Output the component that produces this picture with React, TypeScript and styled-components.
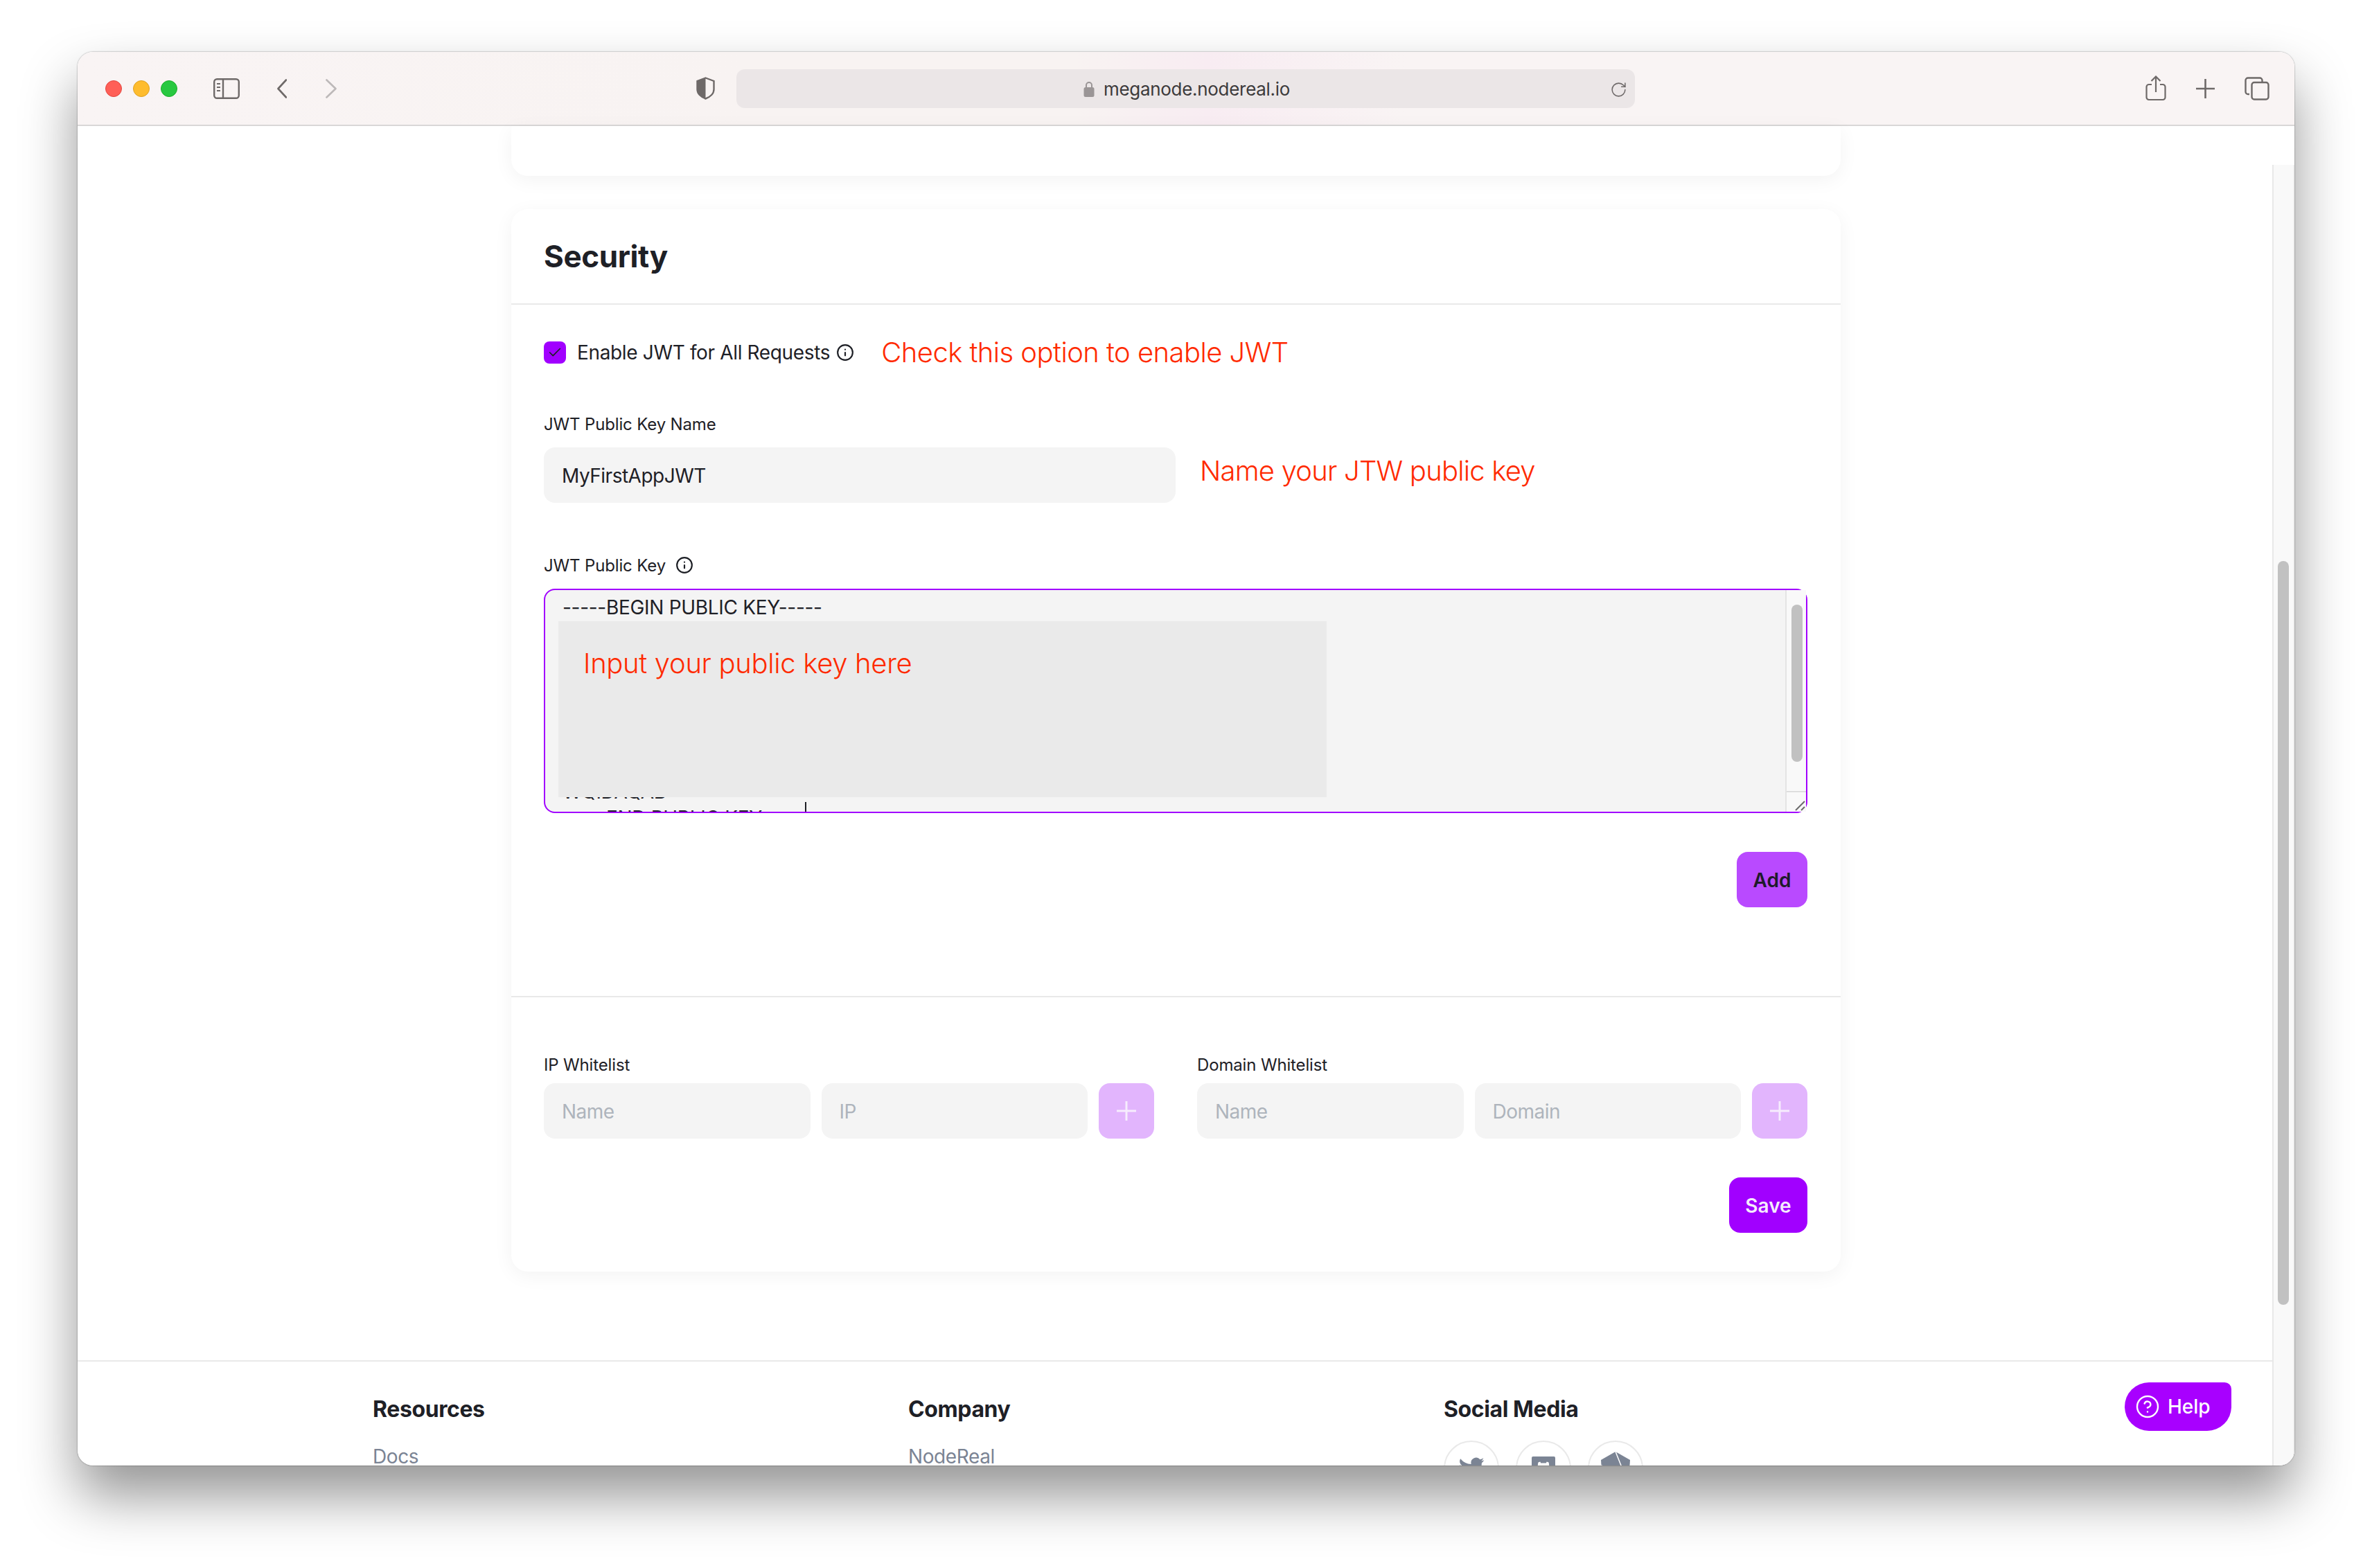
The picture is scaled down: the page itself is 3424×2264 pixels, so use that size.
import styled, { createGlobalStyle } from "styled-components";
import { Check, CircleHelp, Info, RotateCw } from "lucide-react";

const GlobalStyle = createGlobalStyle`
  html, body {
    margin: 0;
    padding: 0;
    background: #fff;
  }
  body {
    width: 3424px;
    height: 2264px;
    overflow: hidden;
    font-family: Inter, "Liberation Sans", sans-serif;
    letter-spacing: -0.3px;
    color: #1e2026;
  }
  * {
    box-sizing: border-box;
  }
`;

const Page = styled.div`
  padding: 75px 112px 0;
`;

const Window = styled.div`
  position: relative;
  display: flex;
  flex-direction: column;
  width: 3200px;
  height: 2041px;
  border-radius: 22px;
  overflow: hidden;
  background: #fff;
`;

const WindowShadow = styled.div`
  border-radius: 22px;
  box-shadow: 0 0 2px rgba(0, 0, 0, 0.5), 0 44px 80px rgba(0, 0, 0, 0.42);
`;

const TitleBar = styled.div`
  flex: 0 0 auto;
  display: flex;
  align-items: center;
  height: 107px;
  padding: 0 36px 0 40px;
  background: linear-gradient(
    90deg,
    #f9f4f4 0%,
    #f8f3f2 30%,
    #f8f3f2 45%,
    #f8ecf2 51%,
    #f9f4f4 60%
  );
  border-bottom: 2px solid #d9d7d7;
`;

const Lights = styled.div`
  display: flex;
  gap: 16px;
`;

const Light = styled.span<{ $fill: string; $edge: string }>`
  width: 24px;
  height: 24px;
  border-radius: 50%;
  background: ${(p) => p.$fill};
  border: 1px solid ${(p) => p.$edge};
`;

const BarIcon = styled.svg<{ $left: number }>`
  flex: 0 0 auto;
  display: block;
  margin-left: ${(p) => p.$left}px;
`;

const UrlBar = styled.div`
  position: relative;
  display: flex;
  align-items: center;
  justify-content: center;
  gap: 13px;
  width: 1297px;
  height: 56px;
  margin-left: 31px;
  padding: 2px 0 0 3px;
  border-radius: 12px;
  background: #ebe6e7;
  font-size: 26px;
  color: #3c3a3b;
`;

const Reload = styled.span`
  position: absolute;
  right: 11px;
  top: 17px;
  display: flex;
  color: #6f6a6a;
`;

const BarActions = styled.div`
  display: flex;
  align-items: center;
  margin-left: auto;
`;

const Body = styled.div`
  flex: 1 1 0;
  display: flex;
  min-height: 0;
`;

const Main = styled.div`
  flex: 1 1 0;
  min-width: 0;
`;

const PageScrollTrack = styled.div`
  flex: 0 0 30px;
  margin-top: 56px;
  padding: 572px 6px 0 6px;
  background: #f9f9f9;
  border-left: 2px solid #e8e8e8;
  border-right: 2px solid #f0f0f0;
`;

const PageScrollThumb = styled.div`
  width: 16px;
  height: 1074px;
  border-radius: 8px;
  background: #c1c1c1;
`;

const Card = styled.section`
  width: 1919px;
  margin-left: 626px;
  background: #fff;
  box-shadow: 0 6px 28px rgba(0, 0, 0, 0.05);
`;

const TopCardEnd = styled(Card)`
  height: 72px;
  margin-bottom: 48px;
  border-radius: 0 0 24px 24px;
`;

const SecurityCard = styled(Card)`
  border-radius: 24px;
  margin-bottom: 128px;
`;

const CardHeader = styled.header`
  display: flex;
  align-items: center;
  height: 138px;
  padding: 0 48px 0 47px;
  border-bottom: 2px solid #e9e9e9;
`;

const CardTitle = styled.h2`
  margin: 0;
  font-size: 44px;
  font-weight: 700;
  letter-spacing: -0.4px;
  color: #1e2026;
`;

const JwtSection = styled.div`
  padding: 53px 48px 128px 47px;
  border-bottom: 2px solid #e9e9e9;
`;

const CheckRow = styled.div`
  display: flex;
  align-items: center;
  height: 32px;
  margin-bottom: 70px;
`;

const CheckBox = styled.span`
  display: flex;
  align-items: center;
  justify-content: center;
  width: 32px;
  height: 32px;
  margin-right: 16px;
  border-radius: 8px;
  background: #a100ff;
  color: #1e2026;
`;

const CheckLabel = styled.span`
  font-size: 28px;
  letter-spacing: -0.35px;
  margin-right: 9px;
`;

const Annotation = styled.span<{ $left?: number; $spacing: number }>`
  margin-left: ${(p) => p.$left ?? 0}px;
  font-size: 40px;
  font-weight: 300;
  letter-spacing: ${(p) => p.$spacing}px;
  line-height: 48px;
  white-space: nowrap;
  color: #ff2a00;
`;

const FieldLabel = styled.label<{ $gap?: number }>`
  display: flex;
  align-items: center;
  gap: 14px;
  height: 34px;
  margin-bottom: ${(p) => p.$gap ?? 17}px;
  font-size: 24px;
  letter-spacing: -0.15px;
  color: #1e2026;
`;

const NameRow = styled.div`
  display: flex;
  align-items: center;
  gap: 35px;
  margin-bottom: 73px;
`;

const TextInput = styled.input`
  display: block;
  flex: 1 1 0;
  min-width: 0;
  height: 80px;
  padding: 2px 26px 0;
  border: none;
  border-radius: 16px;
  outline: none;
  background: #f4f4f4;
  font-family: inherit;
  font-size: 28px;
  letter-spacing: -0.5px;
  color: #1e2026;

  &::placeholder {
    color: #aeb4bc;
    opacity: 1;
  }
`;

const NameInput = styled(TextInput)`
  flex: 0 0 912px;
`;

const NameAnnotation = styled(Annotation)`
  padding-bottom: 12px;
`;

const KeyBox = styled.div`
  position: relative;
  height: 324px;
  border: 2px solid #a100ff;
  border-radius: 16px;
  background: #f4f4f4;
`;

const KeyHead = styled.div`
  height: 45px;
  padding: 6px 0 0 25px;
  font-size: 28px;
  line-height: 38px;
  color: #1e2026;
`;

const KeyCover = styled.div`
  width: 1109px;
  height: 254px;
  margin-left: 19px;
  padding: 37px 0 0 36px;
  background: #eaeaea;
`;

const KeyTail = styled.div`
  height: 21px;
  padding-left: 25px;
  overflow: hidden;
  font-size: 28px;
  line-height: 38px;
  color: #1e2026;
`;

const KeyTailLines = styled.pre`
  margin: -27px 0 0;
  font-family: inherit;
`;

const KeyCaret = styled.span`
  position: absolute;
  left: 375px;
  top: 306px;
  width: 2px;
  height: 14px;
  background: #1e2026;
`;

const KeyScrollTrack = styled.div`
  position: absolute;
  top: 0;
  right: 0;
  bottom: 0;
  width: 30px;
  padding: 21px 5px 0 7px;
  background: #f9f9f9;
  border-left: 2px solid #e4e4e4;
`;

const KeyScrollThumb = styled.div`
  width: 16px;
  height: 227px;
  border-radius: 8px;
  background: #c1c1c1;
`;

const KeyResizer = styled.div`
  position: absolute;
  left: 0;
  right: 0;
  bottom: 0;
  height: 30px;
  border-top: 2px solid #dedede;
`;

const ButtonRow = styled.div`
  display: flex;
  justify-content: flex-end;
  margin-top: 56px;
`;

const Button = styled.button<{ $fill: string; $ink: string; $width: number }>`
  width: ${(p) => p.$width}px;
  height: 80px;
  padding: 2px 0 0;
  border: none;
  border-radius: 16px;
  background: ${(p) => p.$fill};
  font-family: inherit;
  font-size: 28px;
  font-weight: 600;
  color: ${(p) => p.$ink};
`;

const ListsSection = styled.div`
  padding: 80px 48px 56px 47px;
`;

const ListsGrid = styled.div`
  display: grid;
  grid-template-columns: 881px 881px;
  gap: 62px;
`;

const ListRow = styled.div`
  display: flex;
  gap: 16px;
`;

const PlusButton = styled.button`
  display: flex;
  align-items: center;
  justify-content: center;
  flex: 0 0 80px;
  height: 80px;
  padding: 0;
  border: none;
  border-radius: 16px;
  background: #e2b5fd;
`;

const Footer = styled.footer`
  display: grid;
  grid-template-columns: repeat(3, 773px);
  padding: 49px 0 0 426px;
  border-top: 2px solid #e9e9e9;
`;

const FooterColumn = styled.div`
  display: flex;
  flex-direction: column;
`;

const FooterHeading = styled.h4`
  margin: 0 0 31px;
  font-size: 32px;
  line-height: 40px;
  font-weight: 700;
  letter-spacing: -0.4px;
  color: #1e2026;
`;

const FooterLink = styled.a`
  font-size: 28px;
  line-height: 34px;
  letter-spacing: -0.4px;
  color: #7b8494;
`;

const SocialRow = styled.div`
  display: flex;
  gap: 24px;
  margin-top: -6px;
`;

const SocialCircle = styled.a`
  display: flex;
  align-items: center;
  justify-content: center;
  width: 80px;
  height: 80px;
  border: 2px solid #e9e9e9;
  border-radius: 50%;
  color: #7b8494;
`;

const HelpButton = styled.button`
  position: absolute;
  right: 91px;
  bottom: 50px;
  display: flex;
  align-items: center;
  gap: 11px;
  width: 154px;
  height: 70px;
  padding: 0 0 0 15px;
  border: none;
  border-radius: 36px 10px 36px 36px;
  background: #a800ff;
  font-family: inherit;
  font-size: 28px;
  font-weight: 500;
  color: #fff;
`;

const PlusIcon = () => (
  <svg width="28" height="28" viewBox="0 0 28 28" fill="none" stroke="#f6ecfd" strokeWidth="3">
    <path d="M14 0v28M0 14h28" />
  </svg>
);

const App = () => {
  return (
    <>
      <GlobalStyle />
      <Page>
        <WindowShadow>
          <Window>
            <TitleBar>
              <Lights>
                <Light $fill="#ff5f57" $edge="#e2463f" />
                <Light $fill="#febc2e" $edge="#dea123" />
                <Light $fill="#28c840" $edge="#1dad2b" />
              </Lights>
              <BarIcon $left={52} width="38" height="30" viewBox="0 0 38 30" fill="none" stroke="#6e6968" strokeWidth="2.4">
                <rect x="1.2" y="1.2" width="35.6" height="27.6" rx="4" />
                <path d="M14 1v28" />
                <path d="M5 8h5M5 13h5M5 18h5" strokeWidth="2" />
              </BarIcon>
              <BarIcon $left={54} width="14" height="28" viewBox="0 0 14 28" fill="none" stroke="#6e6968" strokeWidth="2.6" strokeLinecap="round" strokeLinejoin="round">
                <path d="M13 1.5 1.5 14 13 26.5" />
              </BarIcon>
              <BarIcon $left={56} width="16" height="28" viewBox="0 0 16 28" fill="none" stroke="#bdb9b9" strokeWidth="2.6" strokeLinecap="round" strokeLinejoin="round">
                <path d="M1.5 1.5 14.5 14 1.5 26.5" />
              </BarIcon>
              <BarIcon $left={519} width="27" height="33" viewBox="0 0 27 33">
                <path d="M13.5 1.5 25.5 6v12c0 6-5 11-12 13.5C6.500 29 1.500 24 1.500 18V6z" fill="none" stroke="#6e6968" strokeWidth="2.4" />
                <path d="M13.500 1.500 1.500 6v12c0 6 5 11 12 13.500z" fill="#6e6968" />
              </BarIcon>
              <UrlBar>
                <svg width="16" height="23" viewBox="0 0 16 23" fill="none">
                  <path d="M4 10V6a4 4 0 0 1 8 0v4" stroke="#9a9596" strokeWidth="2" />
                  <rect x="0.500" y="9" width="15" height="14" rx="2.500" fill="#9a9596" />
                </svg>
                meganode.nodereal.io
                <Reload>
                  <RotateCw size={25} strokeWidth={1.5} />
                </Reload>
              </UrlBar>
              <BarActions>
                <BarIcon $left={0} width="30" height="37" viewBox="0 0 30 37" fill="none" stroke="#6e6968" strokeWidth="2.2">
                  <path d="M9 13H5a3.500 3.500 0 0 0-3.500 3.500v15A3.500 3.500 0 0 0 5 35h20a3.500 3.500 0 0 0 3.500-3.500v-15A3.500 3.500 0 0 0 25 13h-4" />
                  <path d="M15 24V2M8.500 8 15 1.500 21.500 8" />
                </BarIcon>
                <BarIcon $left={41} width="31" height="28" viewBox="0 0 31 28" fill="none" stroke="#6e6968" strokeWidth="2.6">
                  <path d="M15.500 0v28M2 14h27" />
                </BarIcon>
                <BarIcon $left={41} width="36" height="34" viewBox="0 0 36 34" fill="none" stroke="#6e6968" strokeWidth="2.4">
                  <path d="M7 25H5a3.500 3.500 0 0 1-3.500-3.500V5A3.500 3.500 0 0 1 5 1.500h17A3.500 3.500 0 0 1 25.500 5v2" />
                  <rect x="10.500" y="8" width="24" height="24.500" rx="3.500" />
                </BarIcon>
              </BarActions>
            </TitleBar>
            <Body>
              <Main>
                <TopCardEnd />
                <SecurityCard>
                  <CardHeader>
                    <CardTitle>Security</CardTitle>
                  </CardHeader>
                  <JwtSection>
                    <CheckRow>
                      <CheckBox>
                        <Check size={22} strokeWidth={1.8} />
                      </CheckBox>
                      <CheckLabel>Enable JWT for All Requests</CheckLabel>
                      <Info size={26} strokeWidth={2} />
                      <Annotation $left={39} $spacing={-0.56}>Check this option to enable JWT</Annotation>
                    </CheckRow>
                    <FieldLabel>JWT Public Key Name</FieldLabel>
                    <NameRow>
                      <NameInput readOnly defaultValue="MyFirstAppJWT" />
                      <NameAnnotation $spacing={-0.8}>Name your JTW public key</NameAnnotation>
                    </NameRow>
                    <FieldLabel>
                      JWT Public Key
                      <Info size={26} strokeWidth={2} />
                    </FieldLabel>
                    <KeyBox>
                      <KeyHead>-----BEGIN PUBLIC KEY-----</KeyHead>
                      <KeyCover>
                        <Annotation $spacing={-0.33}>Input your public key here</Annotation>
                      </KeyCover>
                      <KeyTail>
                        <KeyTailLines>{"WQIDAQAB\n-----END PUBLIC KEY-----"}</KeyTailLines>
                      </KeyTail>
                      <KeyCaret />
                      <KeyScrollTrack>
                        <KeyScrollThumb />
                        <KeyResizer>
                          <svg width="28" height="28" viewBox="0 0 28 28" fill="none" stroke="#6c6c6c" strokeWidth="2">
                            <path d="M13 26 26 13M21 26l5-5" />
                          </svg>
                        </KeyResizer>
                      </KeyScrollTrack>
                    </KeyBox>
                    <ButtonRow>
                      <Button $fill="#b94aff" $ink="#1e1a2a" $width={102}>Add</Button>
                    </ButtonRow>
                  </JwtSection>
                  <ListsSection>
                    <ListsGrid>
                      <div>
                        <FieldLabel $gap={10}>IP Whitelist</FieldLabel>
                        <ListRow>
                          <TextInput placeholder="Name" />
                          <TextInput placeholder="IP" />
                          <PlusButton>
                            <PlusIcon />
                          </PlusButton>
                        </ListRow>
                      </div>
                      <div>
                        <FieldLabel $gap={10}>Domain Whitelist</FieldLabel>
                        <ListRow>
                          <TextInput placeholder="Name" />
                          <TextInput placeholder="Domain" />
                          <PlusButton>
                            <PlusIcon />
                          </PlusButton>
                        </ListRow>
                      </div>
                    </ListsGrid>
                    <ButtonRow>
                      <Button $fill="#a100ff" $ink="#f5ecfd" $width={113}>Save</Button>
                    </ButtonRow>
                  </ListsSection>
                </SecurityCard>
                <Footer>
                  <FooterColumn>
                    <FooterHeading>Resources</FooterHeading>
                    <FooterLink>Docs</FooterLink>
                  </FooterColumn>
                  <FooterColumn>
                    <FooterHeading>Company</FooterHeading>
                    <FooterLink>NodeReal</FooterLink>
                  </FooterColumn>
                  <FooterColumn>
                    <FooterHeading>Social Media</FooterHeading>
                    <SocialRow>
                      <SocialCircle>
                        <svg width="40" height="40" viewBox="0 0 24 24" fill="currentColor">
                          <path d="M23 5a9 9 0 0 1-2.600.700 4.500 4.500 0 0 0 2-2.500 9 9 0 0 1-2.900 1.100 4.500 4.500 0 0 0-7.700 4.100A12.800 12.800 0 0 1 2.500 3.700a4.500 4.500 0 0 0 1.400 6 4.500 4.500 0 0 1-2-.6c0 2.200 1.500 4.100 3.600 4.500a4.500 4.500 0 0 1-2 .1 4.500 4.500 0 0 0 4.200 3.100A9 9 0 0 1 1 18.700 12.800 12.800 0 0 0 8 20.700c8.300 0 13-7 12.900-13.200A9 9 0 0 0 23 5z" />
                        </svg>
                      </SocialCircle>
                      <SocialCircle>
                        <svg width="34" height="34" viewBox="2 2 36 36" fill="currentColor">
                          <path d="M4 2h32a2 2 0 0 1 2 2v32a2 2 0 0 1-2 2H4a2 2 0 0 1-2-2V4a2 2 0 0 1 2-2zm8 9c-1 4-1 11 0 15h16c1-4 1-11 0-15l-3-1-1 2h-8l-1-2z" fillRule="evenodd" />
                        </svg>
                      </SocialCircle>
                      <SocialCircle>
                        <svg width="44" height="48" viewBox="0 0 44 48" fill="currentColor">
                          <path d="M22 0 43 12 41 46H3L1 12z" />
                          <path d="M22 0 34 30M1 20 34 30M43 20 34 30" fill="none" stroke="#fff" strokeWidth="1.500" />
                        </svg>
                      </SocialCircle>
                    </SocialRow>
                  </FooterColumn>
                </Footer>
              </Main>
              <PageScrollTrack>
                <PageScrollThumb />
              </PageScrollTrack>
            </Body>
            <HelpButton>
              <CircleHelp size={36} strokeWidth={1.6} />
              Help
            </HelpButton>
          </Window>
        </WindowShadow>
      </Page>
    </>
  );
};

export default App;
